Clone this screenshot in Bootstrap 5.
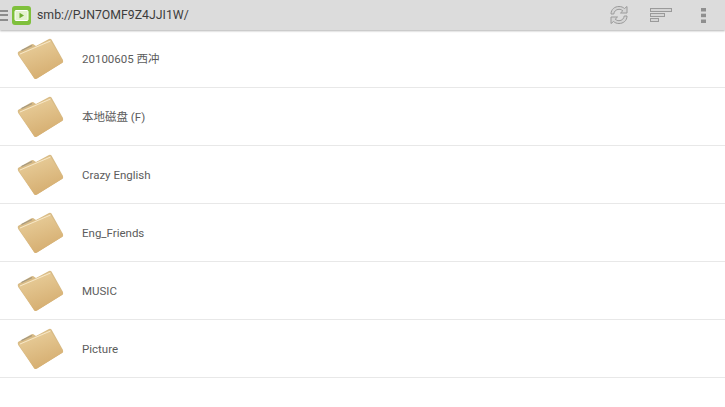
<!doctype html>
<html lang="zh">
  <head>
    <meta charset="UTF-8" />
    <title>smb</title>
    <link href="https://cdn.jsdelivr.net/npm/bootstrap@5.3.0/dist/css/bootstrap.min.css" rel="stylesheet" />
    <style>
      html, body { height: 407px; overflow: hidden; background: #fff; }
      body { font-family: Roboto, "Noto Sans CJK SC", sans-serif; color: #444; }
      .top-bar { height: 30px; background: #dcdcdc; box-shadow: 0 1px 2px rgba(0,0,0,.3); position: relative; }
      .path-text { font-size: 12.3px; color: #3c3c3c; margin-left: 6px; }
      .menu-lines { width: 8px; height: 11px; margin-right: 4px; border-top: 2px solid #8d8d8d; border-bottom: 2px solid #8d8d8d; position: relative; }
      .menu-lines::after { content: ""; position: absolute; left: 0; right: 0; top: 2.5px; height: 2px; background: #8d8d8d; }
      .app-logo { width: 19px; height: 19px; }
      .tool-group { margin-left: auto; }
      .sync-ico { width: 22px; height: 22px; margin-right: 20px; }
      .sort-ico { width: 22px; height: 16px; margin-right: 29px; }
      .more-ico { width: 5px; height: 15px; margin-right: 19px; }
      .list-group-flush > .file-row, .list-group-flush > .file-row:last-child { height: 58px; padding: 0 0 0 17px; border-width: 0 0 1px; border-style: solid; border-color: #e8e8e8; border-radius: 0; background: transparent; }
      .folder-ico { width: 48px; height: 42px; margin-right: 17px; }
      .file-name { font-size: 11.5px; line-height: 16px; color: #5c5c5c; }
    </style>
  </head>
  <body>
    <svg width="0" height="0" class="position-absolute">
      <defs>
        <linearGradient id="fold" x1="0" y1="0" x2="0.4" y2="1">
          <stop offset="0" stop-color="#ebd2a0" />
          <stop offset="1" stop-color="#d6af72" />
        </linearGradient>
        <symbol id="folder" viewBox="0 0 48 42">
          <path d="M1 14 L14 6.500 Q16 5.500 17.500 7 L19 8 L32 1 Q33.500 .4 34.500 1.500 L46 22 Q46.800 24 45 25 L20 40.500 Q18 41.500 17 40 L1.200 17 Q.4 15 1 14 Z" fill="#d8bb86" />
          <path d="M1.500 16 L33 2 L46 23 Q46.500 24.500 45 25 L20 40.500 Q18 41.500 17 40 Z" fill="url(#fold)" />
          <path d="M4.500 12.500 L15 7.500" stroke="#a39880" stroke-width="1.200" fill="none" />
          <path d="M3 16 L33.500 3" stroke="#f7e8c8" stroke-width="1" fill="none" />
        </symbol>
      </defs>
    </svg>

    <!-- top bar -->
    <div class="top-bar d-flex align-items-center">
      <span class="menu-lines"></span>
      <svg class="app-logo" viewBox="0 0 19 19">
        <rect width="19" height="19" rx="3" fill="#7fc03c" />
        <rect x="3" y="4.500" width="13" height="10" rx="1" fill="#e4f2d0" stroke="#fff" stroke-width="1" />
        <path d="M7.500 6.800 L12 9.500 L7.500 12.200 Z" fill="#6fae2f" />
      </svg>
      <span class="path-text">smb://PJN7OMF9Z4JJI1W/</span>
      <div class="tool-group d-flex align-items-center">
        <svg class="sync-ico" viewBox="0 0 22 22" fill="#d4d4d4" stroke="#9a9a9a" stroke-width="1">
          <path d="M3 10 C3 5 7 2.500 11 2.500 C13.500 2.500 15 3.300 16.500 4.500 L19 2.500 L19 9 L12.500 9 L14.800 6.800 C13.500 5.800 12.500 5.300 11 5.300 C8 5.300 6 7.500 5.800 10 Z" />
          <path d="M19 12 C19 17 15 19.500 11 19.500 C8.500 19.500 7 18.700 5.500 17.500 L3 19.500 L3 13 L9.500 13 L7.200 15.200 C8.500 16.200 9.500 16.700 11 16.700 C14 16.700 16 14.500 16.200 12 Z" />
        </svg>
        <svg class="sort-ico" viewBox="0 0 22 16" fill="#d4d4d4" stroke="#9a9a9a" stroke-width="1">
          <rect x=".5" y="1.500" width="21" height="3" />
          <rect x=".5" y="6.500" width="14" height="3" />
          <rect x=".5" y="11.500" width="8" height="3" />
        </svg>
        <svg class="more-ico" viewBox="0 0 5 15" fill="#8f8f8f">
          <rect width="5" height="3.500" />
          <rect y="5.700" width="5" height="3.500" />
          <rect y="11.500" width="5" height="3.500" />
        </svg>
      </div>
    </div>

    <!-- file list -->
    <div class="list-group list-group-flush" id="fileList"></div>

    <script>
      const names = ['20100605 西冲', '本地磁盘 (F)', 'Crazy English', 'Eng_Friends', 'MUSIC', 'Picture'];
      document.getElementById('fileList').innerHTML = names.map((n) => `
        <div class="list-group-item file-row d-flex align-items-center">
          <svg class="folder-ico"><use href="#folder" /></svg>
          <span class="file-name">${n}</span>
        </div>`).join('');
    </script>
    <script src="https://cdn.jsdelivr.net/npm/bootstrap@5.3.0/dist/js/bootstrap.bundle.min.js"></script>
  </body>
</html>
